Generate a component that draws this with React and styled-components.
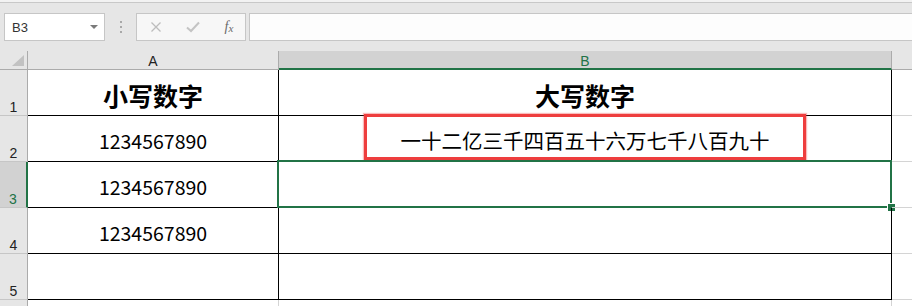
import styled, { createGlobalStyle } from 'styled-components';

const GlobalStyle = createGlobalStyle`
  * { box-sizing: border-box; }
  body {
    margin: 0;
    background: #ffffff;
    overflow: hidden;
    font-family: "Liberation Sans", "Noto Sans CJK SC", sans-serif;
  }
`;

const GREEN = '#217346';

const columns = [
  { key: 'A', width: 251 },
  { key: 'B', width: 613, selected: true },
];

const rows = [
  { n: 1, a: '小写数字', b: '大写数字', head: true },
  { n: 2, a: '1234567890', b: '一十二亿三千四百五十六万七千八百九十', mark: true },
  { n: 3, a: '1234567890', b: '', selected: true },
  { n: 4, a: '1234567890', b: '' },
  { n: 5, a: '', b: '' },
  { n: 6, a: '', b: '', outside: true },
];

const App = () => {
  return (
    <Page>
      <GlobalStyle />
      <TopStrip />
      <FormulaBar>
        <NameBox>
          <span>B3</span>
          <Caret />
        </NameBox>
        <Grip>
          <i />
          <i />
          <i />
        </Grip>
        <FxButtons>
          <IconSlot>
            <svg width="12" height="12" viewBox="0 0 12 12">
              <path d="M1.5 1.5 L10.5 10.5 M10.5 1.5 L1.5 10.5" stroke="#bdbdbd" strokeWidth="1.3" />
            </svg>
          </IconSlot>
          <IconSlot>
            <svg width="14" height="12" viewBox="0 0 14 12">
              <path d="M1 6.5 L5 10 L13 1.5" stroke="#c4c4c4" strokeWidth="2" fill="none" />
            </svg>
          </IconSlot>
          <IconSlot>
            <Fx>
              f<sub>x</sub>
            </Fx>
          </IconSlot>
        </FxButtons>
        <FormulaInput />
      </FormulaBar>

      <Sheet>
        <Corner>
          <svg width="12" height="11" viewBox="0 0 12 11">
            <path d="M12 0 L12 11 L0 11 Z" fill="#c2c2c2" />
          </svg>
        </Corner>
        {columns.map((c) => (
          <ColHead key={c.key} $selected={c.selected}>
            {c.key}
          </ColHead>
        ))}
        <ColHead $rest />

        {rows.map((r) => (
          <Row key={r.n} r={r} />
        ))}
      </Sheet>
    </Page>
  );
};

const Row = ({ r }) => (
  <>
    <RowHead $selected={r.selected}>{r.n}</RowHead>
    <Cell $head={r.head} $outside={r.outside}>
      {r.a}
    </Cell>
    <Cell $head={r.head} $outside={r.outside} $cjk={r.mark}>
      {r.b}
      {r.mark && <RedMark />}
      {r.selected && (
        <Selection>
          <Handle />
        </Selection>
      )}
    </Cell>
    <Cell $rest />
  </>
);

export default App;

const Page = styled.div`
  width: 912px;
  height: 306px;
  overflow: hidden;
  background: #e6e6e6;
`;

const TopStrip = styled.div`
  height: 3px;
  background: #f2f2f2;
  border-bottom: 1px solid #c8c8c8;
`;

const FormulaBar = styled.div`
  display: flex;
  align-items: flex-start;
  height: 48px;
  padding: 10px 0 0 4px;
  background: #e6e6e6;
`;

const NameBox = styled.div`
  width: 101px;
  height: 28px;
  display: flex;
  align-items: center;
  justify-content: space-between;
  padding: 0 6px 0 7px;
  background: #ffffff;
  border: 1px solid #c6c6c6;
  font-size: 13px;
  color: #333;
`;

const Caret = styled.span`
  width: 0;
  height: 0;
  border-left: 4px solid transparent;
  border-right: 4px solid transparent;
  border-top: 4px solid #7a7a7a;
  margin-bottom: 1px;
`;

const Grip = styled.div`
  width: 31px;
  height: 28px;
  display: flex;
  flex-direction: column;
  align-items: center;
  justify-content: center;
  gap: 3px;
  i {
    width: 2px;
    height: 2px;
    background: #a8a8a8;
  }
`;

const FxButtons = styled.div`
  width: 110px;
  height: 28px;
  display: grid;
  grid-template-columns: 38px 36px 36px;
  align-items: center;
  background: #f7f7f7;
  border: 1px solid #c6c6c6;
`;

const IconSlot = styled.div`
  display: flex;
  align-items: center;
  justify-content: center;
`;

const Fx = styled.span`
  font-family: "Liberation Serif", serif;
  font-style: italic;
  font-size: 14px;
  color: #6a6a6a;
  sub {
    font-size: 11px;
    vertical-align: -1px;
  }
`;

const FormulaInput = styled.div`
  flex: 1;
  height: 28px;
  margin-left: 3px;
  background: #fdfdfd;
  border: 1px solid #c6c6c6;
  border-right: none;
`;

const Sheet = styled.div`
  display: grid;
  grid-template-columns: 28px 251px 613px 1fr;
  grid-template-rows: 19px repeat(6, 46px);
  background: #ffffff;
`;

const Corner = styled.div`
  display: flex;
  align-items: flex-end;
  justify-content: flex-end;
  padding: 0 3px 3px 0;
  background: #e6e6e6;
  border-right: 1px solid #ababab;
  border-bottom: 1px solid #ababab;
`;

const ColHead = styled.div`
  display: flex;
  justify-content: center;
  padding-top: 2px;
  font-size: 14px;
  line-height: 16px;
  background: ${(p) => (p.$selected ? '#d2d2d2' : '#e6e6e6')};
  color: ${(p) => (p.$selected ? GREEN : '#222')};
  border-bottom: ${(p) => (p.$selected ? `2px solid ${GREEN}` : '1px solid #ababab')};
  border-right: ${(p) => (p.$rest ? 'none' : '1px solid #ababab')};
`;

const RowHead = styled.div`
  display: flex;
  align-items: flex-end;
  justify-content: center;
  font-size: 14px;
  line-height: 14px;
  padding-bottom: 1px;
  background: ${(p) => (p.$selected ? '#d2d2d2' : '#e6e6e6')};
  color: ${(p) => (p.$selected ? GREEN : '#222')};
  border-right: ${(p) => (p.$selected ? `2px solid ${GREEN}` : '1px solid #ababab')};
  border-bottom: 1px solid #c6c6c6;
`;

const Cell = styled.div`
  position: relative;
  display: flex;
  align-items: center;
  justify-content: center;
  padding-top: ${(p) => (p.$head ? '5px' : '3px')};
  font-family: "Noto Sans CJK SC", "Liberation Sans", sans-serif;
  font-size: ${(p) => (p.$head ? '25px' : p.$cjk ? '20.5px' : '19.5px')};
  font-weight: ${(p) => (p.$head ? 700 : 400)};
  color: #000;
  border-right: ${(p) => (p.$rest ? 'none' : p.$outside ? '1px solid #d4d4d4' : '1px solid #000')};
  border-bottom: ${(p) => (p.$rest || p.$outside ? '1px solid #d4d4d4' : '1px solid #000')};
`;

const RedMark = styled.div`
  position: absolute;
  left: 85px;
  top: -2px;
  width: 442px;
  height: 46px;
  border: 3px solid #ee3e3e;
  box-shadow: 0 0 1px 1px rgba(238, 62, 62, 0.35);
  pointer-events: none;
`;

const Selection = styled.div`
  position: absolute;
  left: -2px;
  top: -2px;
  right: -1px;
  bottom: -1px;
  border: 2px solid ${GREEN};
  pointer-events: none;
`;

const Handle = styled.div`
  position: absolute;
  right: -5px;
  bottom: -5px;
  width: 7px;
  height: 7px;
  background: ${GREEN};
  outline: 1px solid #ffffff;
`;
